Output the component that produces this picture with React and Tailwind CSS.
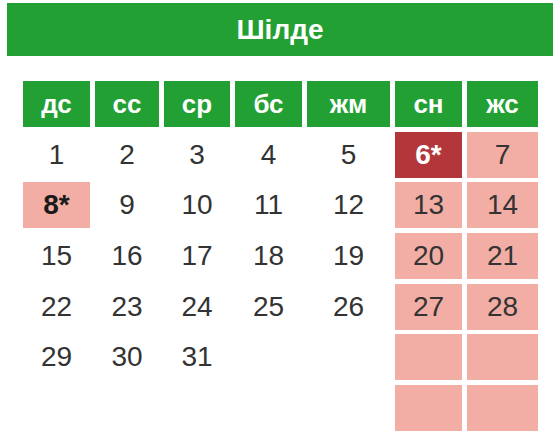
import React from "react";

const days = ["дс", "сс", "ср", "бс", "жм", "сн", "жс"];

// each row: 7 values, "" = empty
const weeks = [
  ["1", "2", "3", "4", "5", "6*", "7"],
  ["8*", "9", "10", "11", "12", "13", "14"],
  ["15", "16", "17", "18", "19", "20", "21"],
  ["22", "23", "24", "25", "26", "27", "28"],
  ["29", "30", "31", "", "", "", ""],
  ["", "", "", "", "", "", ""],
];

const DayCell = ({ value, col }) => {
  const weekend = col >= 5;
  const holiday = value.endsWith("*");

  let cls = "text-[#333333]";
  if (holiday && weekend) cls = "bg-[#b3363a] text-white font-bold";
  else if (holiday) cls = "bg-[#f2aea4] text-[#1a1a1a] font-bold";
  else if (weekend) cls = "bg-[#f2aea4] text-[#333333]";

  return (
    <div className={`h-[46px] flex items-center justify-center text-[28px] ${cls}`}>
      {value}
    </div>
  );
};

export default function App() {
  return (
    <div
      className="w-[560px] h-[447px] bg-white pt-[3px]"
      style={{ fontFamily: '"Liberation Sans", Arial, sans-serif' }}
    >
      {/* month title */}
      <div className="mx-[7px] h-[53px] bg-[#22a033] flex items-center justify-center">
        <span className="text-white font-bold text-[28px]">Шілде</span>
      </div>

      <div className="ml-[23px] mt-[25px] grid grid-cols-[67px_64px_66px_67px_83px_67px_71px] gap-x-[5px] gap-y-[4.7px]">
        {days.map((d) => (
          <div
            key={d}
            className="h-[46px] bg-[#22a033] flex items-center justify-center text-white font-bold text-[26px]"
          >
            {d}
          </div>
        ))}
        {weeks.map((w, r) =>
          w.map((v, c) => <DayCell key={`${r}-${c}`} value={v} col={c} />)
        )}
      </div>
    </div>
  );
}
